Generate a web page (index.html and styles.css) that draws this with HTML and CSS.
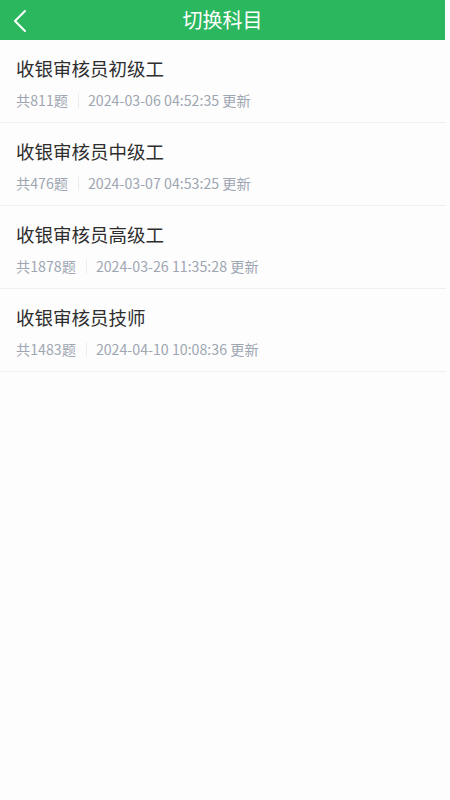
FILE: index.html
```html
<!DOCTYPE html>
<html lang="zh-CN">
<head>
<meta charset="utf-8">
<title>切换科目</title>
<link rel="stylesheet" href="styles.css">
</head>
<body>
<header class="topbar">
  <span class="back">
    <svg width="16" height="24" viewBox="0 0 16 24"><path d="M13 2 L3 12 L13 22" fill="none" stroke="#fff" stroke-width="2" stroke-linecap="round" stroke-linejoin="round"/></svg>
  </span>
  <h1 class="title">切换科目</h1>
</header>
<ul class="list">
  <li class="item">
    <div class="name">收银审核员初级工</div>
    <div class="meta"><span class="count">共811题</span><span class="sep"></span><span class="date">2024-03-06 04:52:35 更新</span></div>
  </li>
  <li class="item">
    <div class="name">收银审核员中级工</div>
    <div class="meta"><span class="count">共476题</span><span class="sep"></span><span class="date">2024-03-07 04:53:25 更新</span></div>
  </li>
  <li class="item">
    <div class="name">收银审核员高级工</div>
    <div class="meta"><span class="count">共1878题</span><span class="sep"></span><span class="date">2024-03-26 11:35:28 更新</span></div>
  </li>
  <li class="item">
    <div class="name">收银审核员技师</div>
    <div class="meta"><span class="count">共1483题</span><span class="sep"></span><span class="date">2024-04-10 10:08:36 更新</span></div>
  </li>
</ul>
</body>
</html>
```

FILE: styles.css
```css
* { box-sizing: border-box; }
html, body {
  margin: 0;
  padding: 0;
  background: #fdfdfd;
  font-family: "Noto Sans CJK SC", "Noto Sans", sans-serif;
}
.topbar {
  position: relative;
  height: 40px;
  margin-right: 5px;
  background: #2bb75e;
  display: flex;
  align-items: center;
  justify-content: center;
}
.back {
  position: absolute;
  left: 12px;
  top: 9px;
  display: flex;
}
.title {
  margin: 0;
  color: #fff;
  font-size: 20px;
  font-weight: 400;
  line-height: 40px;
}
.list {
  list-style: none;
  margin: 0;
  padding: 0;
  margin-right: 4px;
}
.item {
  padding: 14px 16px 12px;
  border-bottom: 1px solid #efefef;
}
.name {
  font-size: 18.5px;
  line-height: 28px;
  color: #2e2e2e;
}
.meta {
  margin-top: 8px;
  display: flex;
  align-items: center;
  font-size: 14.2px;
  line-height: 20px;
  color: #9ea6b2;
}
.sep {
  width: 1px;
  height: 15px;
  background: #ececec;
  margin: 0 9px 0 10px;
}
```
